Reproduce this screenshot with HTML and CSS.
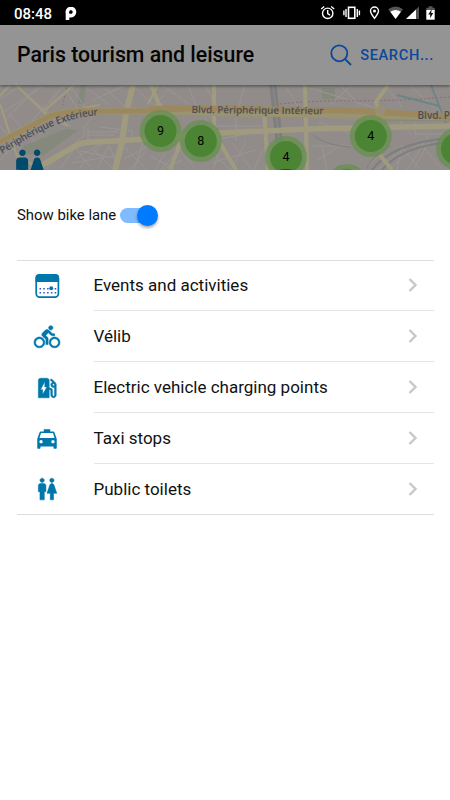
FILE: index.html
```html
<!DOCTYPE html>
<html lang="en">
  <head>
    <meta charset="UTF-8" />
    <meta name="viewport" content="width=device-width, initial-scale=1.0" />
    <title>Paris tourism and leisure</title>
    <link rel="stylesheet" href="styles.css">
  </head>
  <body>
    <div class="statusbar">
      <span class="time">08:48</span>
      <svg class="parking" width="12" height="14" viewBox="0 0 12 14">
        <path d="M2.5 13V6.2A3.6 3.6 0 1 1 6 8.6H4.2" fill="none" stroke="#fff" stroke-width="3.6" />
      </svg>
      <svg class="status-icons" width="125" height="25" viewBox="315 0 125 25">
        <g fill="none" stroke="#fff" stroke-width="1.4">
          <circle cx="327.7" cy="13.3" r="5.2" />
          <path d="M327.7 10v3.6l2.4 1.6M321.2 9l3-2.5M334.2 9l-3-2.5" />
          <rect x="348.5" y="7.3" width="6.3" height="11" stroke-width="1.6" />
          <path d="M346 9v8M357.3 9v8M343.9 10.5v4.8M359.4 10.5v4.8" />
          <path d="M374.5 18.3c-2.3-3-4-5.1-4-7.3a4 4 0 0 1 8 0c0 2.2-1.7 4.3-4 7.3z" />
        </g>
        <circle cx="374.5" cy="11" r="1.5" fill="#fff" />
        <path d="M388.2 9.2q7.4-5.6 14.8 0L395.6 19z" fill="#555" />
        <path d="M390.3 11.8q5.3-3.4 10.6 0L395.6 19z" fill="#fff" />
        <path d="M419 6.5V19h-13z" fill="#555" />
        <path d="M416 9.4V19h-10z" fill="#fff" />
        <path d="M428.7 6.2h3.8v1.5h2.2v3h-8.4v-3h2.4z" fill="#555" />
        <path d="M426.3 10h8.4v9.7h-8.4z" fill="#fff" />
        <path d="M431.8 9l-3.6 5.5h2v3.8l3-5.3h-2z" fill="#111" />
      </svg>
    </div>

    <header class="toolbar">
      <h1>Paris tourism and leisure</h1>
      <button class="search">
        <svg width="22" height="22" viewBox="0 0 22 22">
          <circle cx="9.3" cy="9.3" r="8" />
          <path d="M15 15l6 6" />
        </svg>
        <span>Search...</span>
      </button>
    </header>

    <svg class="map" width="450" height="85" viewBox="0 85 450 85">
      <rect y="85" width="450" height="85" fill="#918c89" />

      <!-- parks -->
      <g fill="#84897c">
        <path d="M23 146l43-17 12 1-34 25-18-1z" />
        <path d="M80 85h6l-2 19h-6z" />
        <path d="M322 88h13v11h-13zM384 114h66v7h-66z" />
      </g>

      <!-- small streets -->
      <g fill="none" stroke="#9a9694" stroke-width="1">
        <path d="M0 99l22-14M0 114l45-29M22 91l42 34M40 85L6 119M57 95l-16 15 30 16M62 87L26 128M62 85l20 30M50 104l22-16 17 25" />
        <path d="M86 88l24 17M92 101l32-16M102 85l23 22M110 92l18-7M0 126l24 27M10 115l26 28M0 160l16-15M18 133l-13 21" />
        <path d="M84 127v9l-9 6M88 127v8h26M88 142v-10h30M92 118l-9 10M100 127l32 4v10" />
        <path d="M46 169l27-24M60 169l15-22 17 23M76 158l28-16-25 27M92 148l21 21M97 169l12-24 10 24M80 151l35 7M72 163l46-8" />
        <path d="M122 145l25 25M124 159l24-13M130 170l17-20M143 143l-9 27M150 156l25 13M165 153l-10 17M176 146l20 23M182 160l-20 10M186 143l-26 27" />
        <path d="M135 88l25 22M149 85l17 27M162 85l28 20M172 85l-20 24M188 85l10 25M205 85l12 22h55M205 117l14 22 44-8M236 117v24M215 126h48M245 85l-8 28" />
        <path d="M206 145l24 25M221 147l-8 23M232 143l20 27M246 141l-15 29M256 150l-42 12M262 150l-8 20M286 87l12 20" />
        <path d="M310 88l65 20M340 85l20 20M352 85l-22 20M385 85l17 22M410 85l25 24M318 122l34 12M313 146h38M318 160l25-16M327 170l-5-24M400 121l12 14M415 122v12h35" />
        <path d="M378 169l25-20 17 20M390 169l30-26 22 26M407 170l22-35M365 169l28-27M402 145l-5 25M430 140l-17 30" />
      </g>

      <!-- rail -->
      <g fill="none" stroke="#7e7d7f">
        <path d="M271 85l9 82M275 85l9 80" stroke-width="3" />
        <path d="M372 170c15-20 42-29 78-32M382 170c13-16 35-25 68-28" stroke-width="1.8" />
        <path d="M313 135c10 8 22 11 38 12M391 146c-12 6-20 14-25 23" stroke-width="1" />
      </g>
      <path d="M66 88l-3 17M280 104c50-6 80 0 170-7" fill="none" stroke="#876d71" stroke-dasharray="2 2" />
      <path d="M397 95l42 11M431 85l16 41" fill="none" stroke="#6c8587" stroke-width="2" />

      <!-- avenues -->
      <g fill="none" stroke="#a09b7e">
        <path d="M0 104l17 52 26 14M16 85l28 27M43 112l31-27M43 112l25 14M82 108l18-3M148 104l10-19M131 85l-5 30M0 96l10-11" stroke-width="2.2" />
        <path d="M133 85l-7 28-4 29-7 28" stroke-width="6" />
        <path d="M34 170l43-25q7-3 16-3l57-3 68-6 90-4 142-3" stroke-width="5.5" />
        <path d="M214 85v48l22 37M305 85l2 85M388 85l-12 17 4 13M380 155l12 15M151 85l9 22M264 110l4 60M180 143l-10 27" stroke-width="4" />
      </g>

      <!-- ring road -->
      <path d="M0 142l50-26q16-5 40-5h59l301 6" fill="none" stroke="#9a936f" stroke-width="7" />
      <path d="M0 142l50-26q16-5 40-5h59" fill="none" stroke="#9b885f" stroke-width="5" />
      <path d="M149 109c80-2 118 1 167 1s92 4 134 7" fill="none" stroke="#9b885f" stroke-width="6" />
      <circle cx="380" cy="111" r="4" fill="#928d89" stroke="#a0925f" stroke-width="2" />

      <defs>
        <path id="ring-west" d="M2 154C33 136 58 117 106 114.5" />
      </defs>
      <g class="road">
        <text><textPath href="#ring-west" textLength="105">Périphérique Extérieur</textPath></text>
        <text x="191.5" y="113" textLength="132" transform="rotate(.6 192 113)">Blvd. Périphérique Intérieur</text>
        <text x="417.5" y="119">Blvd. P</text>
      </g>

      <!-- clusters -->
      <g class="cluster">
        <circle class="halo" cx="160.5" cy="131" r="21" />
        <circle cx="160.5" cy="131" r="16" />
        <text x="160.5" y="134.5">9</text>
        <circle class="halo" cx="200.8" cy="141" r="21" />
        <circle cx="200.8" cy="141" r="16" />
        <text x="200.8" y="145">8</text>
        <circle class="halo" cx="286" cy="157" r="21" />
        <circle cx="286" cy="157" r="16" />
        <text x="286" y="161">4</text>
        <circle class="halo" cx="370.8" cy="136" r="21" />
        <circle cx="370.8" cy="136" r="16" />
        <text x="370.8" y="140">4</text>
        <circle class="halo" cx="457" cy="149" r="21" />
        <circle cx="457" cy="149" r="16" />
        <circle class="halo" cx="347" cy="185" r="21" />
        <circle cx="347" cy="185" r="16" />
      </g>
      <path d="M279 170q7-2 14 0z" fill="#006100" />

      <svg x="10.3" y="146.2" width="39" height="39" viewBox="0 0 24 24" fill="#004a6b">
        <path d="M5.5 22v-7.5H3.6V9c0-1.1.9-2 2-2h3.4c1.1 0 2 .9 2 2v5.5H9.5V22h-4zM18 22v-6h3l-2.54-7.63C18.18 7.55 17.42 7 16.56 7h-.12c-.86 0-1.63.55-1.9 1.37L12 16h3v6h3zM7.5 6c1.11 0 2-.89 2-2s-.89-2-2-2-2 .89-2 2 .89 2 2 2zm9 0c1.11 0 2-.89 2-2s-.89-2-2-2-2 .89-2 2 .89 2 2 2z" />
      </svg>
    </svg>

    <main class="sheet">
      <label class="bike-lane">
        <span>Show bike lane</span>
        <span class="toggle"><span class="knob"></span></span>
      </label>

      <ul class="list">
        <li>
          <svg class="icon" viewBox="0 0 26 26">
            <rect x="2.2" y="1.9" width="22.2" height="22.2" rx="3.5" fill="none" stroke="#0077aa" stroke-width="1.7" />
            <path d="M1.5 9V4.5q0-3.3 3.3-3.3h17q3.3 0 3.3 3.3V9z" fill="#0077aa" />
            <path d="M5.5 15.7h17M5.5 19.7h17" stroke="#2b55c8" stroke-width="1.5" stroke-dasharray="1.5 2.3" />
            <circle cx="17.2" cy="15.3" r="2" fill="#0077aa" />
          </svg>
          <div class="item"><span>Events and activities</span><svg class="chevron" viewBox="0 0 10 14"><path d="M1.5 1l6 6-6 6" /></svg></div>
        </li>
        <li>
          <svg class="icon bike" viewBox="0 0 24 24">
            <path d="M15.5 5.5c1.1 0 2-.9 2-2s-.9-2-2-2-2 .9-2 2 .9 2 2 2zM5 12c-2.8 0-5 2.2-5 5s2.2 5 5 5 5-2.2 5-5-2.2-5-5-5zm0 8.5c-1.9 0-3.5-1.6-3.5-3.5s1.6-3.5 3.5-3.5 3.5 1.6 3.5 3.5-1.6 3.5-3.5 3.5zm5.8-10l2.4-2.4.8.8c1.3 1.3 3 2.1 5.1 2.1V9c-1.5 0-2.7-.6-3.6-1.5l-1.9-1.9c-.5-.4-1-.6-1.6-.6s-1.1.2-1.4.6L7.8 8.4c-.4.4-.6.9-.6 1.4 0 .6.2 1.1.6 1.4L11 14v5h2v-6.2l-2.2-2.3zM19 12c-2.8 0-5 2.2-5 5s2.2 5 5 5 5-2.2 5-5-2.2-5-5-5zm0 8.5c-1.9 0-3.5-1.6-3.5-3.5s1.6-3.5 3.5-3.5 3.5 1.6 3.5 3.5-1.6 3.5-3.5 3.5z" />
          </svg>
          <div class="item"><span>Vélib</span><svg class="chevron" viewBox="0 0 10 14"><path d="M1.5 1l6 6-6 6" /></svg></div>
        </li>
        <li>
          <svg class="icon pump" viewBox="0 0 24 24">
            <path d="M19.77 7.23l.01-.01-3.72-3.72L15 4.56l2.11 2.11c-.94.36-1.61 1.26-1.61 2.33 0 1.38 1.12 2.5 2.5 2.5.36 0 .69-.08 1-.21v7.21c0 .55-.45 1-1 1s-1-.45-1-1V14c0-1.1-.9-2-2-2h-1V5c0-1.1-.9-2-2-2H6c-1.1 0-2 .9-2 2v16h10v-7.5h1.5v5c0 1.38 1.12 2.5 2.5 2.5s2.5-1.12 2.5-2.5V9c0-.69-.28-1.32-.73-1.77zM18 10c-.55 0-1-.45-1-1s.45-1 1-1 1 .45 1 1-.45 1-1 1zM8 18v-4.5H6L10 6v5h2l-4 7z" />
          </svg>
          <div class="item"><span>Electric vehicle charging points</span><svg class="chevron" viewBox="0 0 10 14"><path d="M1.5 1l6 6-6 6" /></svg></div>
        </li>
        <li>
          <svg class="icon" viewBox="0 0 24 24">
            <path d="M18.92 6.01C18.72 5.42 18.16 5 17.5 5H15V3H9v2H6.5c-.66 0-1.21.42-1.42 1.01L3 12v8c0 .55.45 1 1 1h1c.55 0 1-.45 1-1v-1h12v1c0 .55.45 1 1 1h1c.55 0 1-.45 1-1v-8l-2.08-5.99zM6.5 16c-.83 0-1.5-.67-1.5-1.5S5.67 13 6.5 13s1.5.67 1.5 1.5S7.33 16 6.5 16zm11 0c-.83 0-1.5-.67-1.5-1.5s.67-1.5 1.5-1.5 1.5.67 1.5 1.5-.67 1.5-1.5 1.5zM5 11l1.5-4.5h11L19 11H5z" />
          </svg>
          <div class="item"><span>Taxi stops</span><svg class="chevron" viewBox="0 0 10 14"><path d="M1.5 1l6 6-6 6" /></svg></div>
        </li>
        <li>
          <svg class="icon people" viewBox="0 0 24 24">
            <path d="M5.5 22v-7.5H4V9c0-1.1.9-2 2-2h3c1.1 0 2 .9 2 2v5.5H9.5V22h-4zM18 22v-6h3l-2.54-7.63C18.18 7.55 17.42 7 16.56 7h-.12c-.86 0-1.63.55-1.9 1.37L12 16h3v6h3zM7.5 6c1.11 0 2-.89 2-2s-.89-2-2-2-2 .89-2 2 .89 2 2 2zm9 0c1.11 0 2-.89 2-2s-.89-2-2-2-2 .89-2 2 .89 2 2 2z" />
          </svg>
          <div class="item"><span>Public toilets</span><svg class="chevron" viewBox="0 0 10 14"><path d="M1.5 1l6 6-6 6" /></svg></div>
        </li>
      </ul>
    </main>
  </body>
</html>
```

FILE: styles.css
```css
* {
  box-sizing: border-box;
}
body {
  font-family: Roboto, "Liberation Sans", sans-serif;
  background: white;
  color: #111;
  margin: 0;
  height: 100vh;
  display: flex;
  flex-direction: column;
  overflow: hidden;
}
.statusbar {
  height: 25px;
  flex: none;
  background: black;
  color: white;
  display: flex;
  align-items: center;
  padding: 2px 10px 0 14px;
}
.time {
  font-size: 15px;
  font-weight: 500;
}
.parking {
  margin-left: 13px;
}
.status-icons {
  margin: -2px 0 0 auto;
}
.toolbar {
  height: 60px;
  flex: none;
  background: #949494;
  display: flex;
  align-items: center;
  justify-content: space-between;
  padding: 0 16px 2px 17px;
  box-shadow: 0 1px 3px rgba(0, 0, 0, 0.5);
  position: relative;
}
.toolbar h1 {
  margin: 0;
  font-size: 21.3px;
  font-weight: 500;
  color: #050505;
}
.search {
  display: flex;
  align-items: center;
  gap: 8px;
  padding: 2px 0 0;
  border: none;
  background: none;
  color: #0b489a;
  font-family: inherit;
  font-size: 14.6px;
  font-weight: 500;
  letter-spacing: 0.65px;
  text-transform: uppercase;
}
.search svg {
  fill: none;
  stroke: #0b489a;
  stroke-width: 1.8;
}
.map {
  display: block;
  flex: none;
}
.road text {
  font-family: "Open Sans", sans-serif;
  font-size: 10px;
  font-weight: 600;
  fill: #4b4f56;
}
.cluster circle {
  fill: #4b8534;
}
.cluster .halo {
  fill: #66904f;
  fill-opacity: 0.75;
}
.cluster text {
  font-size: 12.5px;
  fill: black;
  text-anchor: middle;
}
.sheet {
  flex: 1;
  background: white;
  padding: 34px 16px 0 17px;
}
.bike-lane {
  display: flex;
  align-items: center;
  height: 22px;
  font-size: 14.9px;
}
.toggle {
  width: 36px;
  height: 15px;
  margin: 0 0 0 4px;
  border-radius: 8px;
  background: #80bbff;
  display: flex;
  align-items: center;
  justify-content: flex-end;
}
.knob {
  width: 21px;
  height: 21px;
  margin-right: -2px;
  flex: none;
  border-radius: 50%;
  background: #007aff;
  box-shadow: 0 2px 3px rgba(0, 0, 0, 0.35);
}
.list {
  list-style: none;
  margin: 34px 0 0;
  padding: 0;
  border-top: 1px solid #dedede;
  border-bottom: 1px solid #dedede;
}
.list li {
  display: flex;
  align-items: center;
  height: 51px;
  padding-left: 17px;
}
.list li:first-child,
.list li:last-child {
  height: 50px;
}
.icon {
  width: 26px;
  height: 26px;
  flex: none;
  fill: #0077aa;
}
.bike,
.pump,
.people {
  stroke: #0077aa;
  stroke-width: 0.5;
  overflow: visible;
}
.item {
  flex: 1;
  height: 100%;
  margin-left: 33.5px;
  padding-right: 16px;
  display: flex;
  align-items: center;
  justify-content: space-between;
  font-size: 17px;
  border-bottom: 1px solid #e4e4e4;
}
.list li:first-child .item {
  padding-bottom: 1px;
}
.list li:last-child .item {
  border-bottom: none;
}
.chevron {
  width: 10px;
  height: 14px;
  fill: none;
  stroke: #c7c7cc;
  stroke-width: 2.4;
}
```
